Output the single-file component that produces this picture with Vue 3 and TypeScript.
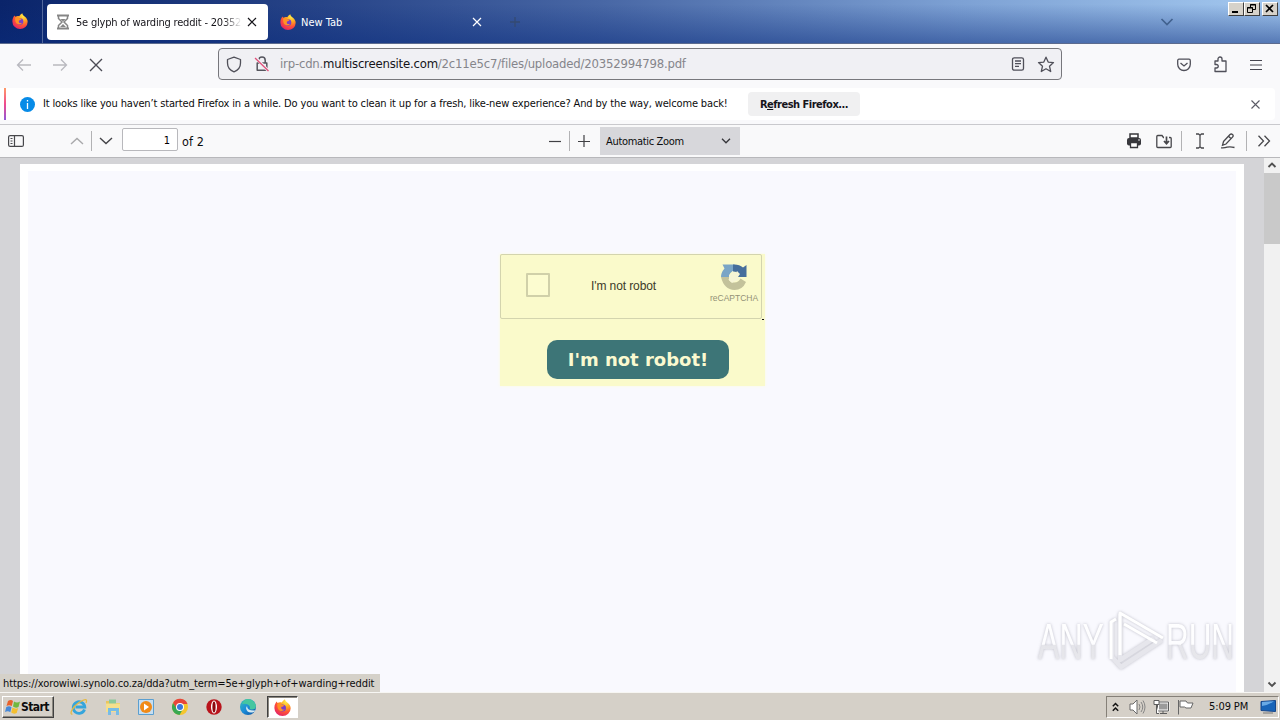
<script setup lang="ts">
import { ref } from 'vue'

interface Tab {
  title: string
  active: boolean
}

const tabs = ref<Tab[]>([
  { title: '5e glyph of warding reddit - 203529', active: true },
  { title: 'New Tab', active: false },
])
const page = ref<string>('1')
const clock = '5:09 PM'
const linkTarget = 'https://xorowiwi.synolo.co.za/dda?utm_term=5e+glyph+of+warding+reddit'
</script>

<template>
  <div class="screen">
    <svg class="defs" width="0" height="0">
      <defs>
        <radialGradient id="ffBody" cx="0.72" cy="0.15" r="0.95">
          <stop offset="0" stop-color="#fff04a" />
          <stop offset="0.35" stop-color="#ffa51f" />
          <stop offset="0.65" stop-color="#ff5136" />
          <stop offset="1" stop-color="#e0206c" />
        </radialGradient>
        <linearGradient id="edgeBlue" x1="0" y1="0" x2="1" y2="1">
          <stop offset="0" stop-color="#35c1b8" />
          <stop offset="0.5" stop-color="#1b8bd8" />
          <stop offset="1" stop-color="#0c4f9e" />
        </linearGradient>
        <symbol id="firefox" viewBox="0 0 16 16">
          <path d="M1.300 4.300 2.400 2.400l1 1.300C4.700 3 6 3 7.200 3.300 8 2 9 1 10.300.2c.1 1.600 1.300 2.300 2.700 3.500 1.500 1.300 2.700 2.800 2.700 5A7.600 7.300 0 0 1 .4 8.600C.3 7 .6 5.500 1.300 4.300z" fill="url(#ffBody)" />
          <circle cx="8" cy="8.500" r="3.300" fill="#7a3fc8" />
          <path d="M3.300 4.500c1.500-.8 3-.5 4.200.8l2 .5c-.4 1.200-1.400 1.300-2.500 1.600-.8 2 .8 3.200 3 2.300-1 2.200-4.900 2.300-6.200-.5-.7-1.500-.8-3.200-.5-4.700z" fill="#ff9226" />
        </symbol>
      </defs>
    </svg>

    <header class="tabbar">
      <div class="pinned"><svg width="16" height="16"><use href="#firefox" /></svg></div>
      <div v-for="tab in tabs" :key="tab.title" class="tab" :class="{ active: tab.active }">
        <svg v-if="tab.active" class="favicon" width="14" height="16" viewBox="0 0 14 16" fill="none" stroke="#858585" stroke-width="1.500">
          <path d="M1 1.500h12M1 14.500h12" stroke-width="2" />
          <path d="M2.500 2v2.500L6 8l-3.500 3.500V14M11.500 2v2.500L8 8l3.500 3.500V14" />
          <path d="M4.500 5h5L7 7.500zM4 13l3-3 3 3z" fill="#858585" stroke="none" />
        </svg>
        <svg v-else class="favicon" width="16" height="16"><use href="#firefox" /></svg>
        <span class="tab-title">{{ tab.title }}</span>
        <svg class="tab-close" width="10" height="10" viewBox="0 0 10 10" fill="none" stroke="currentColor" stroke-width="1.200"><path d="m1 1 8 8M9 1 1 9" /></svg>
      </div>
      <svg class="newtab" width="10" height="10" viewBox="0 0 10 10" stroke="#344a72" stroke-width="1.300"><path d="M5 0v10M0 5h10" /></svg>
      <svg class="tablist" width="14" height="8" viewBox="0 0 14 8" fill="none" stroke="#42628f" stroke-width="1.700"><path d="m1.500 1 5.500 5.500L12.500 1" /></svg>
      <div class="winbtns">
        <span><svg width="16" height="13"><path d="M4 9h6v2H4z" /></svg></span>
        <span><svg width="16" height="13" fill="none" stroke="#000"><path d="M6.500 5V2.500h5v5H9M6 3h6" /><path d="M3.500 5.500h5v5h-5zM3 6h6" /></svg></span>
        <span class="gap"><svg width="16" height="13" fill="none" stroke="#000" stroke-width="1.700"><path d="m4 3 7 7M11 3l-7 7" /></svg></span>
      </div>
    </header>

    <nav class="navbar">
      <svg class="back" width="16" height="14" viewBox="0 0 16 14" fill="none" stroke="#b9b9bf" stroke-width="1.300"><path d="M15 7H1.500M7 1.500 1.500 7 7 12.500" /></svg>
      <svg class="forward" width="16" height="14" viewBox="0 0 16 14" fill="none" stroke="#b9b9bf" stroke-width="1.300"><path d="M1 7h13.500M9 1.500 14.500 7 9 12.500" /></svg>
      <svg class="stop" width="14" height="14" viewBox="0 0 14 14" fill="none" stroke="#4b4b55" stroke-width="1.400"><path d="m1 1 12 12M13 1 1 13" /></svg>
      <div class="urlbar">
        <svg width="16" height="17" viewBox="0 0 16 17" fill="none" stroke="#4f4f59" stroke-width="1.300"><path d="M8 1.200 14.500 3.500v3.500c0 4.200-3 7.500-6.500 8.800C4.500 14.500 1.500 11.200 1.500 7V3.500z" stroke-linejoin="round" /></svg>
        <svg class="lock" width="16" height="18" viewBox="0 0 16 18" fill="none" stroke="#55555e" stroke-width="1.500"><path d="M4.800 8V5.200a3.200 3.200 0 0 1 6.400 0V8M3.200 8h9.600v7.300H3.200z" stroke-linejoin="round" /><path d="M1.500 2.500 14.500 16" stroke="#f0eff5" stroke-width="3" /><path d="m1 3 13.500 13" stroke="#e0517a" stroke-width="1.300" /></svg>
        <span class="url">irp-cdn.<b>multiscreensite.com</b>/2c11e5c7/files/uploaded/20352994798.pdf</span>
        <svg width="14" height="14" viewBox="0 0 14 14" fill="none" stroke="#4f4f59" stroke-width="1.300"><rect x="1.500" y=".8" width="11" height="12.400" rx="1.800" /><path d="M4 4h6M4 6.700h6M4 9.400h4" /></svg>
        <svg class="star" width="18" height="17" viewBox="0 0 18 17" fill="none" stroke="#4f4f59" stroke-width="1.300" stroke-linejoin="round"><path d="m9 1.200 2.200 4.900 5.300.5-4 3.600 1.200 5.300L9 12.800l-4.700 2.700 1.200-5.300-4-3.600 5.300-.5z" /></svg>
      </div>
      <svg class="pocket" width="16" height="14" viewBox="0 0 16 14" fill="none" stroke="#4f4f59" stroke-width="1.300"><path d="M3 1.200h10q1.300 0 1.300 1.500v3.600a6.300 6.200 0 0 1-12.600 0V2.700q0-1.500 1.300-1.500z" /><path d="m4.500 5 3.500 3 3.500-3" /></svg>
      <svg class="puzzle" width="16" height="17" viewBox="0 0 16 17" fill="none" stroke="#4f4f59" stroke-width="1.300" stroke-linejoin="round"><path d="M3 5h3V3a2 2 0 0 1 4 0v2h4v10.500H3V12h1.500a1.700 1.700 0 0 0 0-3.500H3z" /></svg>
      <svg class="menu" width="14" height="12" viewBox="0 0 14 12" stroke="#45454f" stroke-width="1.200"><path d="M1 1.500h12M1 6h12M1 10.500h12" /></svg>
    </nav>

    <section class="notice">
      <i class="stripe"></i>
      <svg class="info" width="15" height="15" viewBox="0 0 15 15"><circle cx="7.500" cy="7.500" r="7.500" fill="#078be7" /><path d="M7.500 3v1.500M7.500 6v6" stroke="#fff" stroke-width="1.300" /></svg>
      <span class="notice-text">It looks like you haven’t started Firefox in a while. Do you want to clean it up for a fresh, like-new experience? And by the way, welcome back!</span>
      <button class="refresh"><span>R<u>e</u>fresh Firefox...</span></button>
      <svg class="dismiss" width="9" height="9" viewBox="0 0 9 9" fill="none" stroke="#5b5b66" stroke-width="1.100"><path d="m.5.5 8 8M8.500.5l-8 8" /></svg>
    </section>

    <section class="pdfbar">
      <svg class="sidebar" width="16" height="12" viewBox="0 0 16 12" fill="none" stroke="#47474b" stroke-width="1.200"><rect x=".6" y=".6" width="14.800" height="10.800" rx="1.500" /><path d="M6.500 0v12M2.500 3.500h2M2.500 6h2M2.500 8.500h2" /></svg>
      <svg class="prev" width="14" height="8" viewBox="0 0 14 8" fill="none" stroke="#a9a9ab" stroke-width="1.400"><path d="m1 7 6-5.500L13 7" /></svg>
      <i class="sep s1"></i>
      <svg class="next" width="14" height="8" viewBox="0 0 14 8" fill="none" stroke="#444448" stroke-width="1.400"><path d="m1 1 6 5.500L13 1" /></svg>
      <input v-model="page" class="page" />
      <span class="total">of 2</span>
      <svg class="minus" width="12" height="12" stroke="#404044" stroke-width="1.200"><path d="M0 6.500h12" /></svg>
      <i class="sep s2"></i>
      <svg class="plus" width="12" height="12" stroke="#404044" stroke-width="1.200"><path d="M0 6.500h12M6 0v12" /></svg>
      <div class="zoom"><span>Automatic Zoom</span><svg width="10" height="6" viewBox="0 0 10 6" fill="none" stroke="#35353a" stroke-width="1.300"><path d="m1 .8 4 4 4-4" /></svg></div>
      <svg class="print" width="16" height="16" viewBox="0 0 16 16"><path d="M4 1h8v4H4z" fill="#fff" stroke="#38383d" stroke-width="1.500" /><rect x="1" y="5" width="14" height="7.500" rx="2" fill="#38383d" /><path d="M4.500 9.500h7v5h-7z" fill="#fff" stroke="#38383d" stroke-width="1.300" /><circle cx="13" cy="7" r=".8" fill="#fff" /></svg>
      <svg class="save" width="16" height="15" viewBox="0 0 16 15" fill="none" stroke="#47474b" stroke-width="1.300"><path d="M8 3.500h-.5L6 1.500H1.800q-1 0-1 1v10q0 1 1 1h12.400q1 0 1-1V4.500q0-1-1-1H13" /><path d="M10.500 2.500v7M8 7l2.500 2.700L13 7" stroke-width="1.700" /></svg>
      <i class="sep s3"></i>
      <svg class="ibeam" width="10" height="16" viewBox="0 0 10 16" fill="none" stroke="#47474b" stroke-width="1.300"><path d="M1 1h2.500L5 2.200 6.500 1H9M5 2v12M1 15h2.500L5 13.800 6.500 15H9" /></svg>
      <svg class="pen" width="16" height="16" viewBox="0 0 16 16" fill="none" stroke="#47474b" stroke-width="1.300"><path d="m3.500 8.500 6.500-7q1.200-1 2.500 0t0 2.700L6 11 2.500 12.300zM8.500 3.200l2.700 2.500M1 14.800q3.500.3 6-.6 3-.9 7.500.3" /></svg>
      <i class="sep s4"></i>
      <svg class="more" width="14" height="12" viewBox="0 0 14 12" fill="none" stroke="#47474b" stroke-width="1.300"><path d="m1.500.8 5 5.200-5 5.200M7.500.8l5 5.200-5 5.200" /></svg>
    </section>

    <main class="viewer">
      <div class="sheet">
        <div class="canvas">
          <div class="captcha">
            <div class="box">
              <i class="check"></i>
              <span class="label">I'm not robot</span>
              <div class="brand">
                <svg width="28" height="28" viewBox="0 0 28 28"><path d="M2.500 1.500h12v7Q9.500 8 9 14H1q0-4.500 3.500-8.500z" fill="#7aa5c6" /><path d="M13 1.500q6-.5 10 3L26.500 2v12H15l3-3.500q-2-2.500-5-2z" fill="#466e9c" /><path d="M1 14h9.500l-2 2.500q2 3.500 6 3 4 0 6-4L26 19q-3.500 8-11.500 8Q4 26.500 1 14z" fill="#c3c29b" /><path d="m9 12 3-1V8l4 2 1-2 3 3-2 3 1 3-4 1-3 2-3-3z" fill="#f6f5d6" /></svg>
                <small>reCAPTCHA</small>
              </div>
            </div>
            <i class="dash"></i>
            <a class="cta"><span>I'm not robot!</span></a>
          </div>
        </div>
      </div>
      <div class="scrollbar">
        <svg width="16" height="15" fill="none" stroke="#505050" stroke-width="1.900"><path d="m4.500 9 3.500-3.500L11.500 9" /></svg>
        <i class="thumb"></i>
        <svg class="down" width="16" height="15" fill="none" stroke="#505050" stroke-width="1.900"><path d="M4.500 5.500 8 9l3.500-3.500" /></svg>
      </div>
      <svg class="watermark" width="204" height="72" viewBox="0 0 204 72">
        <defs>
          <linearGradient id="wm" x1="0" y1="0" x2="0" y2="1">
            <stop offset="0" stop-color="#fff" /><stop offset="0.54" stop-color="#fdfdff" /><stop offset="0.56" stop-color="#e5e5ea" /><stop offset="1" stop-color="#e9e9ed" />
          </linearGradient>
        </defs>
        <g class="wm-text" fill="url(#wm)">
          <text x="4" y="52" textLength="66" lengthAdjust="spacingAndGlyphs">ANY</text>
          <text x="132" y="52" textLength="68" lengthAdjust="spacingAndGlyphs">RUN</text>
        </g>
        <g class="wm-mark" fill="none" stroke-linejoin="round">
          <path d="M78 14v36l9 10 41-27M86 7v46l34-22" stroke="#e6e6ec" stroke-width="4.500" />
          <path d="M77 52V15l5-3M86 48V6l43 25M90 17l33 19" stroke="#fff" stroke-width="3" />
        </g>
      </svg>
      <div class="status"><span>{{ linkTarget }}</span></div>
    </main>

    <footer class="taskbar">
      <div class="start">
        <svg width="16" height="16" viewBox="0 0 16 16"><path d="M3 2q3-2 5 0L6.800 7Q4 5.500 1.500 7z" fill="#e8622c" /><path d="M9 2.500q3 2 6 0L13.500 8q-3 1.500-5.500-.5z" fill="#72b83f" /><path d="M1.300 8q3-1.500 5.200.2l-1.200 5Q3 11.500 0 13z" fill="#4789d8" /><path d="M7.500 8.500q3 2 5.700.5l-1.500 5q-3 1.500-5.500-.5z" fill="#f4bf2f" /></svg>
        <b>Start</b>
      </div>
      <div class="apps">
        <span><svg width="18" height="18" viewBox="0 0 18 18" fill="none"><path d="M14.500 11.500a5.800 5.800 0 1 1 .3-2.500H5.500" stroke="#35a5dc" stroke-width="2.800" /><path d="M2.500 16C-1 17 2 9 9 4.500s8.500-3.500 7 .5" stroke="#e5b943" stroke-width="1.300" /></svg></span>
        <span><svg width="18" height="18" viewBox="0 0 18 18"><path d="M2 3h6l1 2h7v8H2z" fill="#e9c65f" /><path d="M5 1.500h7v5H5z" fill="#8cc99a" /><path d="M2 5.500h14V14H2z" fill="#f5df8d" /><path d="M4 10h11v7h-3v-4H7v4H4z" fill="#77bce6" /></svg></span>
        <span><svg width="18" height="18" viewBox="0 0 18 18"><path d="M1.500 1.500h15v15h-15z" fill="#c7def0" stroke="#5b9fd0" /><circle cx="9" cy="9" r="6" fill="#f18a16" /><path d="m7 5.500 5 3.500-5 3.500z" fill="#fff" /></svg></span>
        <span><svg width="18" height="18" viewBox="0 0 18 18"><circle cx="9" cy="9" r="8" fill="#f5c62d" /><path d="M2 5a8 8 0 0 1 14.500 1H9L5.500 11z" fill="#e6463b" /><path d="M2 5a8 8 0 0 0 6.500 12l3.500-6H6z" fill="#38a852" /><circle cx="9" cy="9" r="4" fill="#fff" /><circle cx="9" cy="9" r="3" fill="#3978dc" /></svg></span>
        <span><svg width="18" height="18" viewBox="0 0 18 18"><circle cx="9" cy="9" r="7.700" fill="#b9131b" /><ellipse cx="9" cy="9" rx="3" ry="6.500" fill="#fff" /><ellipse cx="9" cy="9" rx="1.600" ry="5.500" fill="#8d080e" /></svg></span>
        <span><svg width="18" height="18" viewBox="0 0 18 18"><circle cx="9" cy="9" r="8" fill="url(#edgeBlue)" /><path d="M9 1a8 8 0 0 1 8 7q0 4-5 3.500-2-.5-1-2.500Q9 5 3 6 5 1 9 1z" fill="#45c6a0" /><path d="M8 8q0 5 8.500 4.500L15 14Q8 16 7 10z" fill="#d5eaf2" /></svg></span>
        <span class="running"><svg width="17" height="17"><use href="#firefox" /></svg></span>
      </div>
      <div class="tray">
        <svg class="chev" width="7" height="10" viewBox="0 0 7 10" fill="none" stroke="#111" stroke-width="1.500"><path d="m.8 4.200 2.700-2.700 2.700 2.700M.8 8.700 3.500 6l2.700 2.700" /></svg>
        <svg class="sound" width="17" height="16" viewBox="0 0 17 16" fill="none" stroke="#6a6a6a"><path d="M1 5h3l4-4v14l-4-4H1z" fill="#fff" /><path d="M10 5q2 3 0 6M12 3q3.500 5 0 10M14 1.500q4 6.500 0 13" stroke="#858585" /></svg>
        <svg class="net" width="17" height="16" viewBox="0 0 17 16" stroke="#5c5c5c"><path d="M5 3.500h10.500v8H5z" fill="#9b9b9b" stroke="#fff" stroke-width="2" /><path d="M4.500 3h11v9h-11zM7 14.500h7M10 12v2" fill="none" /><path d="M1 1.500h5v4H1zM3.500 6v8.500H6" fill="#fff" /></svg>
        <svg class="flag" width="17" height="16" viewBox="0 0 17 16" fill="#fff" stroke="#666"><path d="M1.500 1v14.500M3 2h6l1.500 2H16l-2 5H9L7.500 8H3z" /></svg>
        <span class="clock">{{ clock }}</span>
        <svg class="desk" width="16" height="14" viewBox="0 0 16 14"><path d="M1 1.500 15.500.5v11L1 10.500z" fill="#1864b8" stroke="#17468a" /><path d="m2 2 12-.8Q9 5 2 6z" fill="#68a9e5" /><path d="M3 13h10" stroke="#777" /></svg>
      </div>
    </footer>
  </div>
</template>

<style>
html, body { margin: 0; overflow: hidden; }
</style>

<style scoped>
* { box-sizing: border-box; }
.screen { position: relative; display: flex; flex-direction: column; width: 1280px; height: 720px; overflow: hidden; background: #f9f9fb; color: #0c0c0d; font: 11px/14px "DejaVu Sans Condensed", "DejaVu Sans", sans-serif; font-stretch: condensed; }
.defs { position: absolute; }
svg { display: block; flex: none; }
span { white-space: nowrap; }
.tabbar { display: flex; align-items: center; flex: none; height: 44px; border-bottom: 1px solid #5c6b8e; background: linear-gradient(to bottom, transparent 10%, rgba(10, 44, 125, .5)), linear-gradient(to right, #0a246a 0%, #274488 25%, #4867a5 47%, #7da1d4 75%, #a3c8ef 100%); }
.pinned { width: 43px; height: 43px; padding: 13px 0 0 12px; border-right: 1px solid #52689d; }
.tab { display: flex; align-items: center; width: 221px; height: 36px; margin-left: 4px; padding-left: 9px; color: #fff; border-radius: 4px; }
.tab.active { background: #fff; color: #15141a; }
.tab:not(.active) { width: 225px; margin-left: 3px; }
.tab.active .favicon { margin: 0 6px 0 0; }
.favicon { margin-right: 5px; }
.tab-title { width: 166px; overflow: hidden; padding-top: 3px; letter-spacing: 0; }
.active .tab-title { letter-spacing: -.2px; -webkit-mask-image: linear-gradient(to right, #000 88%, transparent); mask-image: linear-gradient(to right, #000 88%, transparent); }
.tab-close { margin-left: 5px; }
.newtab { margin-left: 14px; }
.tablist { margin-left: 640px; }
.winbtns { display: flex; align-self: flex-start; margin: 2px 0 0 54px; }
.winbtns span { width: 16px; height: 14px; background: #d6d2ca; border: 1px solid; border-color: #fff #3f3f3f #3f3f3f #fff; }
.winbtns svg { margin: -1px; }
.winbtns .gap { margin-left: 2px; }
.navbar { display: flex; align-items: center; flex: none; height: 44px; padding-bottom: 3px; background: #f9f9fb; }
.back { margin-left: 16px; }
.forward { margin-left: 20px; }
.stop { margin-left: 21px; }
.urlbar { display: flex; align-items: center; width: 844px; height: 32px; margin: -1px 0 0 115px; padding: 0 6px 0 7px; border: 1px solid #77777c; border-radius: 4px; background: #f0f0f4; }
.lock { margin-left: 12px; }
.url { flex: 1; margin-left: 10px; font-size: 13px; letter-spacing: -.2px; color: #85858b; }
.url b { font-weight: 400; color: #15141a; }
.star { margin-left: 12px; }
.pocket { margin-left: 114px; }
.puzzle { margin-left: 20px; }
.menu { margin-left: 21px; }
.notice { display: flex; align-items: center; flex: none; height: 32px; margin-right: 5px; background: #fff; border-radius: 0 4px 4px 0; }
.stripe { width: 2px; height: 32px; margin-left: 4px; background: linear-gradient(#ff9a68, #f04a8d 50%, #9059d8); }
.info { margin-left: 14px; }
.notice-text { width: 689px; margin: -1px 0 0 8px; letter-spacing: -.144px; }
.refresh { width: 112px; height: 24px; margin-left: 16px; padding: 1px 0 0; border: 0; border-radius: 4px; background: #f0f0f1; color: #15141a; font: bold 11px/14px "DejaVu Sans Condensed", "DejaVu Sans", sans-serif; font-stretch: condensed; letter-spacing: -.5px; }
.dismiss { margin-left: 391px; }
.pdfbar { display: flex; align-items: center; flex: none; height: 34px; margin-top: 4px; border-top: 1px solid #c9c9cd; border-bottom: 1px solid #b8b8bb; background: #f9f9fa; }
.sidebar { margin-left: 8px; }
.prev { margin-left: 46px; }
.sep { width: 1px; height: 20px; background: #b2b2b4; }
.s1 { margin-left: 7px; }
.next { margin-left: 7px; }
.page { width: 56px; height: 23px; margin: -3px 0 0 9px; padding: 1px 7px 0 0; border: 1px solid #b8b8bc; border-radius: 2px; background: #fff; text-align: right; font: 11px "DejaVu Sans Condensed", sans-serif; font-stretch: condensed; outline: 0; }
.total { width: 30px; margin: 1px 0 0 4px; font-size: 12.500px; letter-spacing: .1px; }
.minus { margin-left: 337px; }
.s2 { margin-left: 8px; }
.plus { margin-left: 8px; }
.zoom { display: flex; align-items: center; justify-content: space-between; width: 140px; height: 28px; margin-left: 10px; padding: 0 9px 0 6px; background: #d7d7db; letter-spacing: -.33px; }
.zoom span { padding-top: 1px; }
.print { margin-left: 386px; }
.save { margin-left: 14px; }
.s3 { margin-left: 9px; }
.ibeam { margin-left: 13px; }
.pen { margin-left: 15px; }
.s4 { margin-left: 10px; }
.more { margin-left: 10px; }
.viewer { position: relative; display: flex; flex: none; height: 534px; background: #d4d4d7; }
.sheet { width: 1224px; height: 528px; margin: 6px 20px 0; padding: 7px 8px 0; background: #fff; }
.canvas { height: 521px; background: #f9f9fe; padding: 83px 0 0 472px; }
.captcha { position: relative; width: 265px; height: 132px; background: #fafacb; box-shadow: 0 0 3px #fbfbdf; }
.box { display: flex; width: 262px; height: 65px; border: 1px solid #d3d4ae; border-radius: 2px; }
.check { width: 24px; height: 24px; margin: 18px 0 0 25px; border: 2px solid #d0d0a9; border-radius: 1px; background: #fcfcd0; }
.label { width: 66px; margin: 24px 0 0 41px; font: 12px/14px "Liberation Sans", sans-serif; letter-spacing: -.1px; color: #3c3b29; }
.brand { width: 50px; margin: 8px 0 0 52px; }
.brand svg { margin-left: 11px; }
.brand small { display: block; margin-top: 2px; margin-left: 1px; font: 8.500px/10px "Liberation Sans", sans-serif; color: #929176; }
.dash { position: absolute; top: 65px; left: 262px; width: 2px; height: 1px; background: #111; }
.cta { display: flex; align-items: center; justify-content: center; width: 182px; height: 39px; margin: 21px 0 0 47px; border-radius: 10px; background: #3d7577; color: #faf9d0; font: bold 18px/22px "DejaVu Sans", sans-serif; font-stretch: normal; }
.scrollbar { display: flex; flex-direction: column; width: 16px; height: 534px; background: #f1f1f1; }
.thumb { height: 71px; background: #c9c9c9; }
.down { margin-top: auto; }
.watermark { position: absolute; left: 1034px; top: 449px; filter: drop-shadow(0 0 1.500px rgba(60, 60, 80, .3)); }
.wm-text { font: 50px "Liberation Sans", sans-serif; }
.status { position: absolute; left: 0; top: 516px; width: 380px; height: 18px; padding: 3px 0 0 3px; background: #d5d1c9; letter-spacing: -.09px; }
.taskbar { display: flex; align-items: center; flex: none; height: 28px; border-top: 1px solid #f7f6f3; background: #d5d0c8; }
.start { display: flex; align-items: center; width: 52px; height: 22px; margin: 1px 0 0 2px; padding-left: 2px; border: 1px solid; border-color: #fff #404040 #404040 #fff; box-shadow: inset -1px -1px #8c8880; }
.start b { font-size: 12px; letter-spacing: -.6px; }
.apps { display: flex; align-items: center; margin-left: 8px; }
.apps span { display: grid; place-items: center; width: 33.800px; height: 22px; margin-top: 1px; }
.apps .running { width: 31px; margin-left: 2px; background: #fff; border: 1px solid; border-color: #404040 #fff #fff #404040; box-shadow: inset 1px 1px #8c8880; }
.tray { display: flex; align-items: center; width: 173px; height: 22px; margin: 1px 1px 0 auto; border: 1px solid; border-color: #858078 #fff #fff #858078; }
.chev { margin-left: 5px; }
.sound { margin-left: 10px; }
.net { margin-left: 7px; }
.flag { margin-left: 7px; }
.clock { width: 41px; margin-left: 15px; letter-spacing: -.1px; }
.desk { margin-left: 10px; }
</style>
